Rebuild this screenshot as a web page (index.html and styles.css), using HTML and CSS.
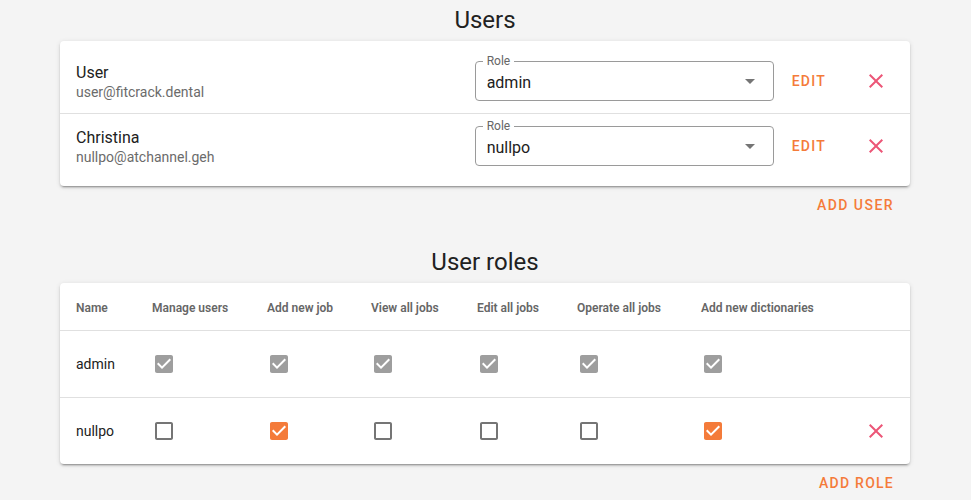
FILE: index.html
```html
<!DOCTYPE html>
<html lang="en">
<head>
<meta charset="utf-8">
<title>Users</title>
<link rel="stylesheet" href="styles.css">
</head>
<body>
<main class="page">
  <section class="section">
    <h2 class="title">Users</h2>
    <div class="card list">
      <div class="user-row">
        <div class="user-info">
          <div class="name">User</div>
          <div class="email">user@fitcrack.dental</div>
        </div>
        <div class="select">
          <span class="select-label">Role</span>
          <span class="select-value">admin</span>
          <svg class="select-arrow" viewBox="0 0 24 24"><path d="M7 10l5 5 5-5z"/></svg>
        </div>
        <button class="text-btn edit">Edit</button>
        <button class="icon-btn danger"><svg viewBox="0 0 24 24"><path d="M19 6.41L17.59 5 12 10.59 6.41 5 5 6.41 10.59 12 5 17.59 6.41 19 12 13.41 17.59 19 19 17.59 13.41 12z"/></svg></button>
      </div>
      <div class="divider"></div>
      <div class="user-row">
        <div class="user-info">
          <div class="name">Christina</div>
          <div class="email">nullpo@atchannel.geh</div>
        </div>
        <div class="select">
          <span class="select-label">Role</span>
          <span class="select-value">nullpo</span>
          <svg class="select-arrow" viewBox="0 0 24 24"><path d="M7 10l5 5 5-5z"/></svg>
        </div>
        <button class="text-btn edit">Edit</button>
        <button class="icon-btn danger"><svg viewBox="0 0 24 24"><path d="M19 6.41L17.59 5 12 10.59 6.41 5 5 6.41 10.59 12 5 17.59 6.41 19 12 13.41 17.59 19 19 17.59 13.41 12z"/></svg></button>
      </div>
    </div>
    <div class="actions"><button class="text-btn wide">Add user</button></div>
  </section>

  <section class="section roles">
    <h2 class="title">User roles</h2>
    <div class="card">
      <table class="roles-table">
        <colgroup>
          <col class="c-name"><col class="c-manage"><col class="c-add"><col class="c-view"><col class="c-edit"><col class="c-operate"><col class="c-dict"><col class="c-del">
        </colgroup>
        <thead>
          <tr>
            <th>Name</th><th>Manage users</th><th>Add new job</th><th>View all jobs</th><th>Edit all jobs</th><th>Operate all jobs</th><th>Add new dictionaries</th><th></th>
          </tr>
        </thead>
        <tbody>
          <tr>
            <td>admin</td>
            <td><svg class="cb cb-disabled" viewBox="0 0 24 24"><path d="M19 3H5c-1.11 0-2 .9-2 2v14c0 1.1.89 2 2 2h14c1.11 0 2-.9 2-2V5c0-1.1-.89-2-2-2zm-9 14l-5-5 1.41-1.41L10 14.17l7.59-7.59L19 8l-9 9z"/></svg></td>
            <td><svg class="cb cb-disabled" viewBox="0 0 24 24"><path d="M19 3H5c-1.11 0-2 .9-2 2v14c0 1.1.89 2 2 2h14c1.11 0 2-.9 2-2V5c0-1.1-.89-2-2-2zm-9 14l-5-5 1.41-1.41L10 14.17l7.59-7.59L19 8l-9 9z"/></svg></td>
            <td><svg class="cb cb-disabled" viewBox="0 0 24 24"><path d="M19 3H5c-1.11 0-2 .9-2 2v14c0 1.1.89 2 2 2h14c1.11 0 2-.9 2-2V5c0-1.1-.89-2-2-2zm-9 14l-5-5 1.41-1.41L10 14.17l7.59-7.59L19 8l-9 9z"/></svg></td>
            <td><svg class="cb cb-disabled" viewBox="0 0 24 24"><path d="M19 3H5c-1.11 0-2 .9-2 2v14c0 1.1.89 2 2 2h14c1.11 0 2-.9 2-2V5c0-1.1-.89-2-2-2zm-9 14l-5-5 1.41-1.41L10 14.17l7.59-7.59L19 8l-9 9z"/></svg></td>
            <td><svg class="cb cb-disabled" viewBox="0 0 24 24"><path d="M19 3H5c-1.11 0-2 .9-2 2v14c0 1.1.89 2 2 2h14c1.11 0 2-.9 2-2V5c0-1.1-.89-2-2-2zm-9 14l-5-5 1.41-1.41L10 14.17l7.59-7.59L19 8l-9 9z"/></svg></td>
            <td><svg class="cb cb-disabled" viewBox="0 0 24 24"><path d="M19 3H5c-1.11 0-2 .9-2 2v14c0 1.1.89 2 2 2h14c1.11 0 2-.9 2-2V5c0-1.1-.89-2-2-2zm-9 14l-5-5 1.41-1.41L10 14.17l7.59-7.59L19 8l-9 9z"/></svg></td>
            <td></td>
          </tr>
          <tr>
            <td>nullpo</td>
            <td><svg class="cb cb-off" viewBox="0 0 24 24"><path d="M19 5v14H5V5h14m0-2H5c-1.1 0-2 .9-2 2v14c0 1.1.9 2 2 2h14c1.1 0 2-.9 2-2V5c0-1.1-.9-2-2-2z"/></svg></td>
            <td><svg class="cb cb-on" viewBox="0 0 24 24"><path d="M19 3H5c-1.11 0-2 .9-2 2v14c0 1.1.89 2 2 2h14c1.11 0 2-.9 2-2V5c0-1.1-.89-2-2-2zm-9 14l-5-5 1.41-1.41L10 14.17l7.59-7.59L19 8l-9 9z"/></svg></td>
            <td><svg class="cb cb-off" viewBox="0 0 24 24"><path d="M19 5v14H5V5h14m0-2H5c-1.1 0-2 .9-2 2v14c0 1.1.9 2 2 2h14c1.1 0 2-.9 2-2V5c0-1.1-.9-2-2-2z"/></svg></td>
            <td><svg class="cb cb-off" viewBox="0 0 24 24"><path d="M19 5v14H5V5h14m0-2H5c-1.1 0-2 .9-2 2v14c0 1.1.9 2 2 2h14c1.1 0 2-.9 2-2V5c0-1.1-.9-2-2-2z"/></svg></td>
            <td><svg class="cb cb-off" viewBox="0 0 24 24"><path d="M19 5v14H5V5h14m0-2H5c-1.1 0-2 .9-2 2v14c0 1.1.9 2 2 2h14c1.1 0 2-.9 2-2V5c0-1.1-.9-2-2-2z"/></svg></td>
            <td><svg class="cb cb-on" viewBox="0 0 24 24"><path d="M19 3H5c-1.11 0-2 .9-2 2v14c0 1.1.89 2 2 2h14c1.11 0 2-.9 2-2V5c0-1.1-.89-2-2-2zm-9 14l-5-5 1.41-1.41L10 14.17l7.59-7.59L19 8l-9 9z"/></svg></td>
            <td class="del-cell"><button class="icon-btn danger"><svg viewBox="0 0 24 24"><path d="M19 6.41L17.59 5 12 10.59 6.41 5 5 6.41 10.59 12 5 17.59 6.41 19 12 13.41 17.59 19 19 17.59 13.41 12z"/></svg></button></td>
          </tr>
        </tbody>
      </table>
    </div>
    <div class="actions"><button class="text-btn">Add role</button></div>
  </section>
</main>
</body>
</html>
```

FILE: styles.css
```css
* { box-sizing: border-box; }

html, body {
  margin: 0;
  padding: 0;
  background: #f4f4f4;
  font-family: Roboto, "Liberation Sans", Arial, sans-serif;
  color: #212121;
}

.page {
  width: 850px;
  margin: 0 60px;
}

.section.roles {
  margin-top: 19px;
}

.title {
  margin: 0;
  padding-bottom: 1px;
  font-size: 24px;
  font-weight: 400;
  line-height: 40px;
  text-align: center;
  color: #212121;
}

.card {
  background: #fff;
  border-radius: 4px;
  box-shadow: 0 3px 1px -2px rgba(0,0,0,.2), 0 2px 2px 0 rgba(0,0,0,.14), 0 1px 5px 0 rgba(0,0,0,.12);
  overflow: hidden;
}

.list {
  padding: 8px 0;
}

.user-row {
  display: flex;
  align-items: center;
  height: 64px;
  padding: 0 16px;
}

.divider {
  height: 1px;
  background: #e0e0e0;
}

.user-info {
  flex: 1;
  display: flex;
  flex-direction: column;
  padding-top: 1px;
}

.name {
  font-size: 16px;
  line-height: 20px;
  color: #212121;
}

.email {
  font-size: 14px;
  line-height: 18px;
  color: #6b6b6b;
}

.select {
  position: relative;
  width: 299px;
  height: 40px;
  border: 1px solid #9a9a9a;
  border-radius: 4px;
  display: flex;
  align-items: center;
  padding: 0 11px;
}

.select-label {
  position: absolute;
  left: 7px;
  top: -8px;
  padding: 0 4px;
  background: #fff;
  font-size: 12px;
  line-height: 14px;
  color: #666;
}

.select-value {
  flex: 1;
  font-size: 16px;
  line-height: 20px;
  padding-top: 4px;
  color: #212121;
}

.select-arrow {
  width: 24px;
  height: 24px;
  fill: #757575;
}

button {
  font-family: inherit;
  border: 0;
  background: transparent;
  margin: 0;
  cursor: pointer;
}

.text-btn {
  height: 36px;
  padding: 0 16px;
  font-size: 14px;
  font-weight: 500;
  letter-spacing: 1.25px;
  text-transform: uppercase;
  color: #f47b3a;
}

.text-btn.wide {
  letter-spacing: 1.45px;
}

.edit {
  margin-left: 2px;
  margin-right: 16px;
}

.icon-btn {
  width: 36px;
  height: 36px;
  padding: 0;
  display: flex;
  align-items: center;
  justify-content: center;
}

.icon-btn svg {
  width: 24px;
  height: 24px;
}

.danger svg {
  fill: #ec5677;
}

.actions {
  display: flex;
  justify-content: flex-end;
  margin-top: 1px;
}

.roles-table {
  width: 100%;
  table-layout: fixed;
  border-collapse: collapse;
}

.c-name { width: 76px; }
.c-manage { width: 115px; }
.c-add { width: 104px; }
.c-view { width: 106px; }
.c-edit { width: 100px; }
.c-operate { width: 124px; }
.c-dict { width: 157px; }
.c-del { width: 68px; }

.roles-table th {
  height: 47px;
  padding: 3px 16px 0;
  text-align: left;
  font-size: 12px;
  font-weight: 600;
  color: #666;
  white-space: nowrap;
  border-bottom: 1px solid #e0e0e0;
}

.roles-table td {
  height: 67px;
  padding: 1px 16px 0;
  font-size: 14px;
  color: #212121;
  vertical-align: middle;
}

.roles-table tbody tr:first-child td {
  border-bottom: 1px solid #e0e0e0;
}

.cb {
  display: block;
  width: 24px;
  height: 24px;
}

.cb-disabled { fill: #9e9e9e; }
.cb-off { fill: #757575; }
.cb-on { fill: #f47b3a; }
```
